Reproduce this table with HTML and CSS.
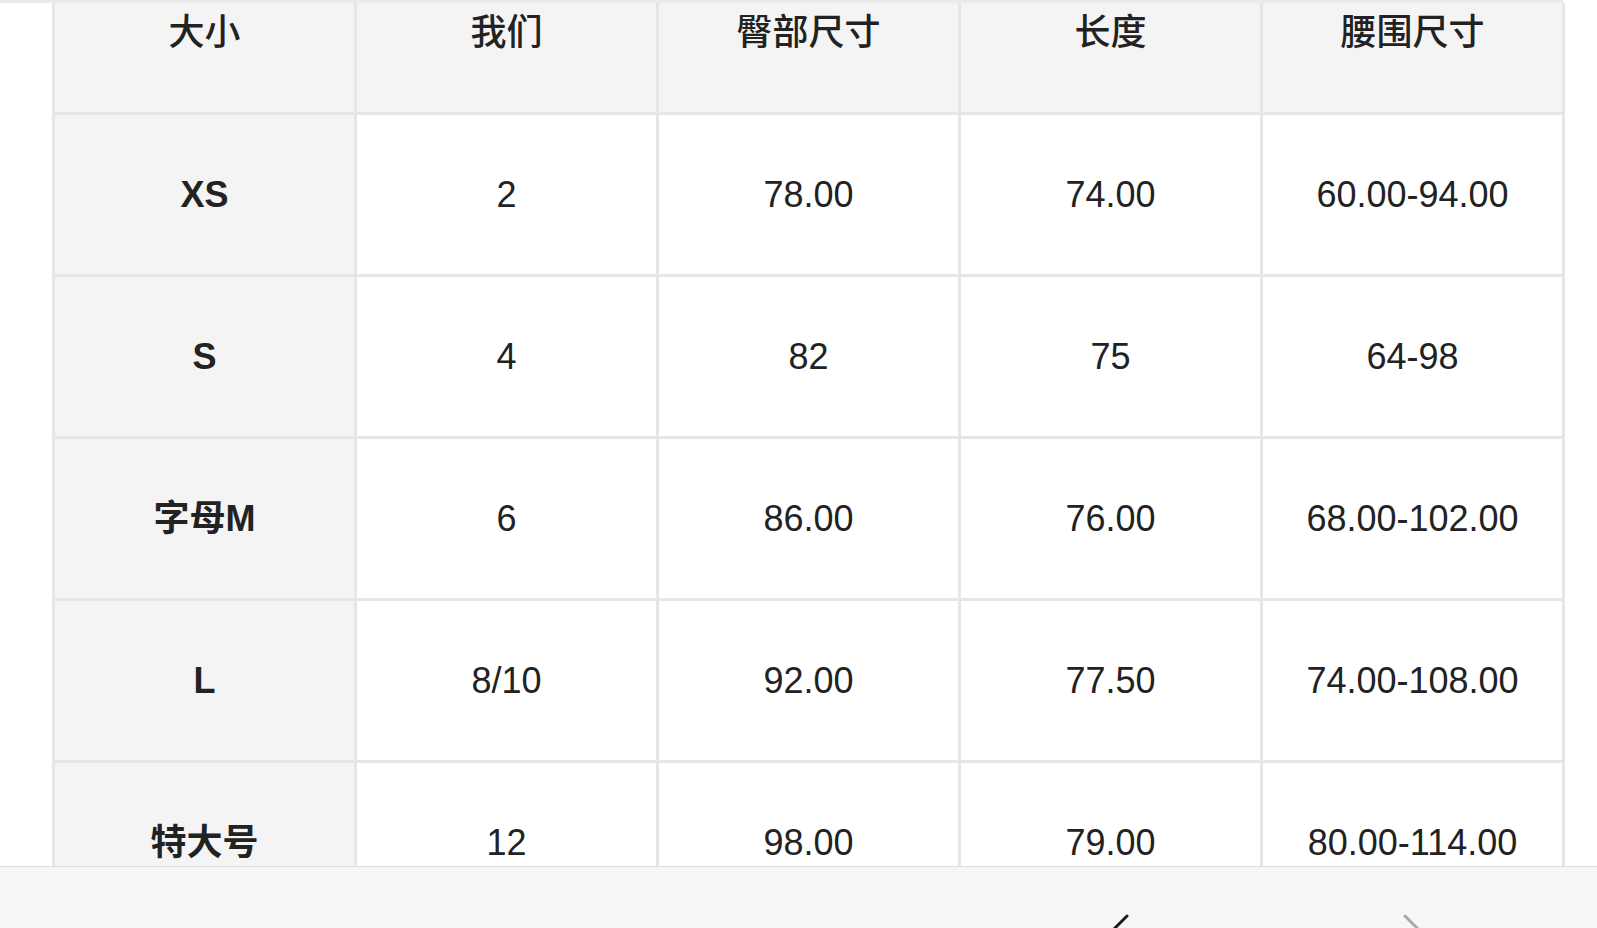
FILE: index.html
```html
<!DOCTYPE html>
<html lang="zh-CN">
<head>
<meta charset="utf-8">
<title>尺码表</title>
<link rel="stylesheet" href="styles.css">
</head>
<body>
<div class="page">
  <div class="sizes">
    <div class="cell head">大小</div>
    <div class="cell head">我们</div>
    <div class="cell head">臀部尺寸</div>
    <div class="cell head">长度</div>
    <div class="cell head">腰围尺寸</div>

    <div class="cell label">XS</div>
    <div class="cell">2</div>
    <div class="cell">78.00</div>
    <div class="cell">74.00</div>
    <div class="cell">60.00-94.00</div>

    <div class="cell label">S</div>
    <div class="cell">4</div>
    <div class="cell">82</div>
    <div class="cell">75</div>
    <div class="cell">64-98</div>

    <div class="cell label">字母M</div>
    <div class="cell">6</div>
    <div class="cell">86.00</div>
    <div class="cell">76.00</div>
    <div class="cell">68.00-102.00</div>

    <div class="cell label">L</div>
    <div class="cell">8/10</div>
    <div class="cell">92.00</div>
    <div class="cell">77.50</div>
    <div class="cell">74.00-108.00</div>

    <div class="cell label">特大号</div>
    <div class="cell">12</div>
    <div class="cell">98.00</div>
    <div class="cell">79.00</div>
    <div class="cell">80.00-114.00</div>
  </div>
</div>
<div class="bottombar">
  <div class="nav">
    <svg class="chev" width="24" height="40" viewBox="0 0 24 40"><path d="M20 2 L2 20 L20 38" fill="none" stroke="#1a1a1a" stroke-width="3" stroke-linecap="round" stroke-linejoin="round"/></svg>
    <svg class="chev" width="24" height="40" viewBox="0 0 24 40"><path d="M4 2 L22 20 L4 38" fill="none" stroke="#a8a8a8" stroke-width="3" stroke-linecap="round" stroke-linejoin="round"/></svg>
  </div>
</div>
</body>
</html>
```

FILE: styles.css
```css
html, body {
  margin: 0;
  padding: 0;
  background: #ffffff;
  overflow: hidden;
}

body {
  font-family: "Liberation Sans", "Noto Sans CJK SC", Arial, sans-serif;
  color: #222222;
  height: 928px;
}

.page {
  width: 1563px;
  border-top: 3px solid #ebebeb;
}

.sizes {
  margin-left: 52px;
  width: 1513px;
  box-sizing: border-box;
  display: grid;
  grid-template-columns: repeat(5, 1fr);
  grid-template-rows: 109px repeat(5, 159px);
  gap: 3px;
  padding: 0 3px 3px 3px;
  background: #e6e6e6;
}

.cell {
  background: #ffffff;
  display: flex;
  align-items: center;
  justify-content: center;
  font-size: 36px;
  line-height: 43px;
  font-weight: 400;
}

.head {
  background: #f4f4f4;
  align-items: flex-start;
  padding-top: 5px;
  font-family: "Noto Sans CJK SC", sans-serif;
  font-weight: 500;
}

.label {
  background: #f4f4f4;
  font-weight: 700;
}

.bottombar {
  position: fixed;
  left: 0;
  right: 0;
  bottom: 0;
  height: 61px;
  background: #f6f6f6;
  border-top: 1px solid #dddddd;
}

.nav {
  display: flex;
  padding-left: 1107px;
  padding-top: 47px;
  gap: 270px;
}

.chev {
  display: block;
  flex: none;
}
```
